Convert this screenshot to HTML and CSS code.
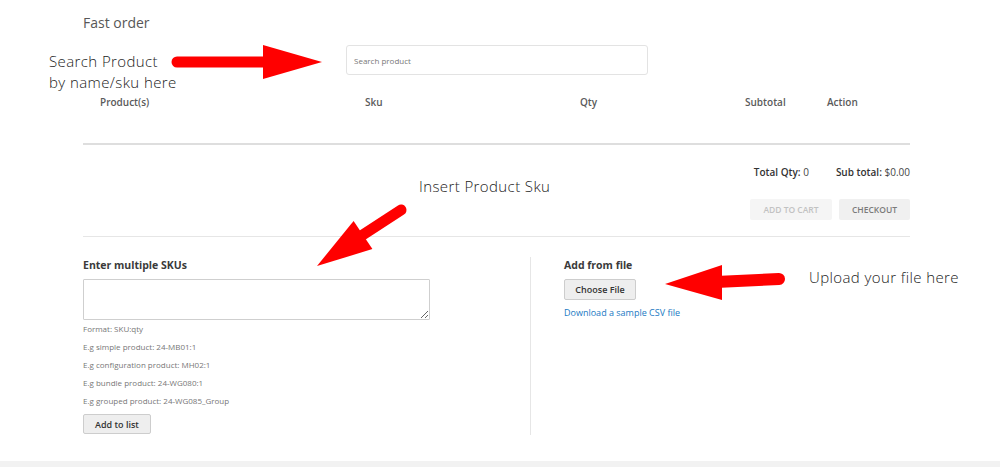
FILE: index.html
```html
<!DOCTYPE html>
<html lang="en">
<head>
    <meta charset="UTF-8">
    <meta name="viewport" content="width=device-width, initial-scale=1.0">
    <title>Fast order</title>
    <link rel="stylesheet" href="styles.css">
</head>
<body>
    <div class="page">
        <h1 class="title">Fast order</h1>

        <div class="search-row">
            <input type="text" class="search" placeholder="Search product">
        </div>

        <div class="cart-head">
            <span>Product(s)</span>
            <span>Sku</span>
            <span>Qty</span>
            <span>Subtotal</span>
            <span>Action</span>
        </div>

        <div class="totals">
            <span><b>Total Qty:</b> 0</span>
            <span><b>Sub total:</b> $0.00</span>
        </div>

        <div class="actions">
            <button type="button" class="btn-cart" disabled>ADD TO CART</button>
            <button type="button" class="btn-checkout">CHECKOUT</button>
        </div>

        <div class="bulk">
            <div class="bulk-skus">
                <h3>Enter multiple SKUs</h3>
                <textarea class="sku-box"></textarea>
                <ul class="hints">
                    <li>Format: SKU:qty</li>
                    <li>E.g simple product: 24-MB01:1</li>
                    <li>E.g configuration product: MH02:1</li>
                    <li>E.g bundle product: 24-WG080:1</li>
                    <li>E.g grouped product: 24-WG085_Group</li>
                </ul>
                <button type="button" class="btn-grey">Add to list</button>
            </div>

            <div class="bulk-file">
                <h3>Add from file</h3>
                <button type="button" class="btn-grey btn-file">Choose File</button>
                <a href="#" class="sample">Download a sample CSV file</a>
            </div>
        </div>
    </div>

    <div class="band"></div>

    <!-- help notes drawn over the page -->
    <p class="note note-search">Search Product<br>by name/sku here</p>
    <p class="note note-sku">Insert Product Sku</p>
    <p class="note note-file">Upload your file here</p>

    <svg class="arrows" width="1000" height="467" viewBox="0 0 1000 467">
        <g fill="#ff0000" stroke="#ff0000" stroke-linecap="round">
            <line x1="177" y1="62" x2="268" y2="62" stroke-width="11"/>
            <polygon points="263,45 322,62 263,79" stroke="none"/>

            <line x1="401" y1="210" x2="358" y2="238" stroke-width="11"/>
            <polygon points="353.6,220.9 317,266 372.4,249.1" stroke="none"/>

            <line x1="779" y1="279" x2="716" y2="282" stroke-width="12"/>
            <polygon points="722,265 665,284 722,300" stroke="none"/>
        </g>
    </svg>
</body>
</html>
```

FILE: styles.css
```css
body {
    margin: 0;
    padding: 0;
    position: relative;
    background-color: #fff;
    font-family: "Open Sans", Arial, sans-serif;
    color: #333;
}

.page {
    width: 827px;
    padding: 13px 0 0 83px;
}

.title {
    margin: 0;
    font-size: 14px;
    line-height: 20px;
    font-weight: 400;
    color: #575757;
}

.search-row {
    margin-top: 12px;
    padding-left: 263px;
}

.search {
    box-sizing: border-box;
    width: 302px;
    height: 30px;
    padding: 0 7px;
    border: 1px solid #e3e3e3;
    border-radius: 3px;
    font-family: "Open Sans", Arial, sans-serif;
    font-size: 8px;
    outline: none;
}

.search::placeholder {
    color: #777;
}

.cart-head {
    display: grid;
    grid-template-columns: 265px 215px 165px 82px 1fr;
    box-sizing: border-box;
    height: 50px;
    margin-top: 20px;
    padding-left: 17px;
    border-bottom: 2px solid #dedede;
    font-size: 10px;
    font-weight: 600;
    line-height: 14px;
    color: #5a5a5a;
}

.totals {
    display: flex;
    justify-content: flex-end;
    gap: 27px;
    margin-top: 20px;
    font-size: 10px;
    line-height: 14px;
    color: #444;
}

.totals b {
    font-weight: 600;
    color: #333;
}

.actions {
    display: flex;
    justify-content: flex-end;
    gap: 7px;
    margin-top: 20px;
    padding-bottom: 16px;
    border-bottom: 1px solid #e6e6e6;
}

.actions button {
    height: 21px;
    border: none;
    border-radius: 2px;
    font-family: "Open Sans", Arial, sans-serif;
    font-size: 8.5px;
    font-weight: 600;
}

.btn-cart {
    width: 82px;
    background-color: #f5f5f5;
    color: #c2c2c2;
}

.btn-checkout {
    width: 71px;
    background-color: #f0f0f0;
    color: #7a7a7a;
    cursor: pointer;
}

.bulk {
    display: flex;
    padding-top: 20px;
}

.bulk h3 {
    margin: 0;
    font-size: 10.5px;
    line-height: 16px;
    font-weight: 700;
    color: #3a3a3a;
}

.bulk-skus {
    width: 447px;
    padding-bottom: 1px;
}

.sku-box {
    display: block;
    box-sizing: border-box;
    width: 347px;
    height: 41px;
    margin-top: 6px;
    border: 1px solid #cfcfcf;
    border-radius: 1px;
    resize: vertical;
}

.hints {
    list-style: none;
    margin: 0;
    padding: 0;
    font-size: 8px;
    line-height: 18px;
    color: #777;
}

.btn-grey {
    display: block;
    height: 20px;
    margin-top: 4px;
    padding: 0 11px;
    border: 1px solid #cdcdcd;
    border-radius: 2px;
    background-color: #eee;
    font-family: "Open Sans", Arial, sans-serif;
    font-size: 9px;
    font-weight: 600;
    color: #333;
    cursor: pointer;
}

.bulk-file {
    padding-left: 33px;
    border-left: 1px solid #e6e6e6;
}

.btn-file {
    width: 72px;
    height: 21px;
    margin-top: 6px;
    padding: 0;
}

.sample {
    display: block;
    margin-top: 6px;
    font-size: 9px;
    line-height: 14px;
    color: #1979c3;
    text-decoration: none;
}

.band {
    height: 6px;
    margin-top: 26px;
    background-color: #f2f2f2;
}

.note {
    position: absolute;
    margin: 0;
    font-family: "Open Sans", Lato, sans-serif;
    font-size: 15px;
    font-weight: 300;
    letter-spacing: 0.4px;
    line-height: 21px;
    color: #222;
}

.note-search {
    left: 49px;
    top: 51px;
}

.note-sku {
    left: 419px;
    top: 176px;
}

.note-file {
    left: 809px;
    top: 267px;
}

.arrows {
    position: absolute;
    left: 0;
    top: 0;
    pointer-events: none;
}
```
